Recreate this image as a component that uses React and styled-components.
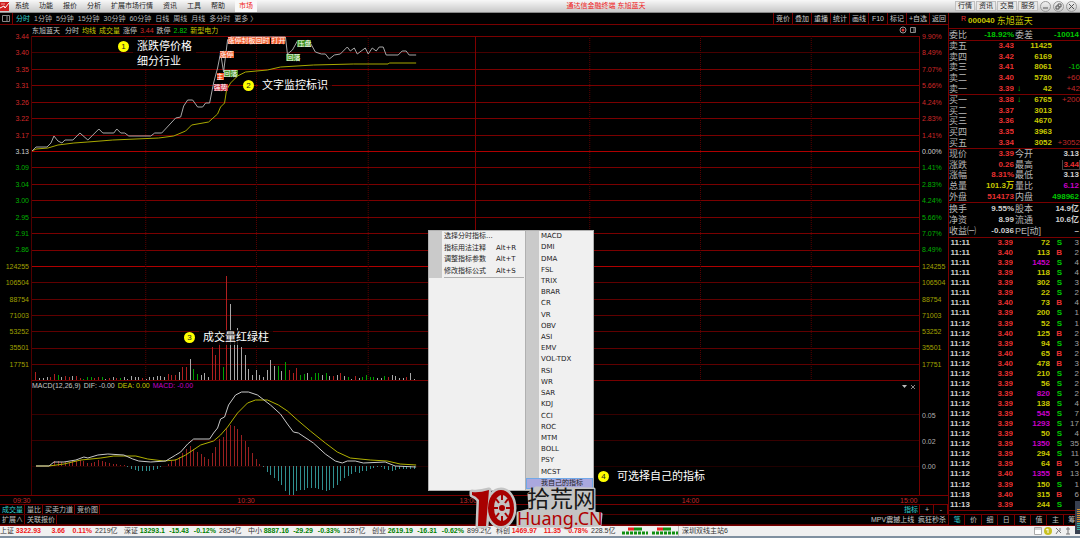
import React from 'react'
import styled, { createGlobalStyle } from 'styled-components'

const GlobalStyle = createGlobalStyle`
  * { box-sizing: border-box; }
  body {
    margin: 0;
    background: #000;
    overflow-x: hidden;
    font-family: 'Liberation Sans', 'Noto Sans CJK SC', sans-serif;
    font-size: 7px;
    line-height: 10px;
    color: #c8c8c8;
  }
  button {
    font: inherit;
    color: inherit;
    background: none;
    border: 0;
    padding: 0;
    margin: 0;
    white-space: nowrap;
  }
`

const red = '#e83030'
const green = '#00c800'
const yellow = '#c8c800'
const purple = '#c800c8'
const cyan = '#30d0d0'
const line = '#780000'

const Page = styled.div`
  position: relative;
  display: flex;
  flex-direction: column;
  white-space: nowrap;
`

/* ---------- menu bar ---------- */

const MenuBar = styled.header`
  display: flex;
  align-items: center;
  height: 13px;
  background: linear-gradient(#f8f8f8, #c8c8c8);
  border-bottom: 1px solid #888;
  color: #222;
`
const Logo = styled.svg`
  width: 10px;
  height: 10px;
  margin-right: 5px;
`
const MenuItems = styled.nav`
  display: flex;
  align-items: center;
  gap: 10px;
`
const MarketTab = styled.button`
  height: 12px;
  padding: 0 4px;
  background: #f8f8f8;
  color: #f02020;
`
const WindowTitle = styled.div`
  flex: 1;
  color: #f02020;
  text-align: center;
`
const WindowTools = styled.div`
  display: flex;
  align-items: center;
  gap: 1px;
  padding-right: 3px;
`
const ToolButton = styled.button`
  width: 20px;
  height: 10px;
  background: #e8e8e8;
  border: 1px solid #c0c0c0;
  line-height: 8px;
`
const RoundButton = styled.button`
  display: flex;
  width: 11px;
  height: 11px;
  margin-left: 1px;
  border: 1px solid #999;
  border-radius: 50%;
`

/* ---------- left side ---------- */

const Main = styled.div`
  display: flex;
`
const Left = styled.main`
  flex: 1;
  min-width: 0;
`
const Toolbar = styled.div`
  display: flex;
  height: 12px;
  border-bottom: 1px solid ${line};
  line-height: 12px;
`
const PanelToggle = styled.button`
  display: flex;
  align-items: center;
  justify-content: center;
  width: 13px;
  border-right: 1px solid ${line};
`
const Periods = styled.div`
  display: flex;
  flex: 1;
  gap: 4px;
  padding-left: 3px;
`
const Period = styled.button`
  color: ${p => (p.$on ? cyan : '#b8b8b8')};
`
const Action = styled.button`
  min-width: 19px;
  padding: 0 2px;
  border-left: 1px solid ${line};
`
const InfoRow = styled.div`
  display: flex;
  gap: 3px;
  height: 11px;
  padding: 0 32px;
  line-height: 11px;
`
const Txt = styled.span`
  color: ${p => p.$c || '#c8c8c8'};
`
const Spacer = styled.span`
  flex: 1;
`
const Panel = styled.section`
  display: grid;
  grid-template-columns: 31px 1fr 28px;
  height: ${p => p.$h}px;
`
const Axis = styled.div`
  display: flex;
  flex-direction: column;
  justify-content: space-between;
  padding: ${p => p.$pad || '0 2px'};
  text-align: ${p => (p.$right ? 'left' : 'right')};
`
const AxisLabel = styled.span`
  height: 8px;
  margin: -4px 0;
  line-height: 9px;
  color: ${p => p.$c};
`
const Plot = styled.div`
  position: relative;
  display: flex;
  flex-direction: column;
  min-width: 0;
  border-left: 1px solid #500000;
  border-right: 1px solid ${line};
`
const Chart = styled.svg`
  display: block;
  width: 100%;
  height: 100%;
  min-height: 0;
  flex: 1;
`
const PlotHead = styled.div`
  display: flex;
  gap: 3px;
  height: 11px;
  padding-right: 3px;
  border-top: 1px solid ${line};
`
const Signal = styled.span`
  position: absolute;
  height: 7px;
  line-height: 7px;
  color: #fff;
  background: ${p => p.$bg};
`
const TimeAxis = styled.div`
  display: grid;
  grid-template-columns: 31px repeat(4, 1fr) 28px;
  height: 10px;
  border-top: 1px solid ${line};
  border-bottom: 1px solid ${line};
  color: #c02828;
  line-height: 9px;
`
const TimeLabel = styled.span`
  margin-left: -16px;
  &:first-child { margin-left: 13px; }
  &:last-child { margin-left: -20px; }
`
const TabRow = styled.div`
  display: flex;
  height: 10px;
  border-bottom: 1px solid #500000;
  line-height: 10px;
`
const Tab = styled.button`
  min-width: 14px;
  padding: 0 1px 0 2px;
  border-right: 1px solid ${line};
  color: ${p => (p.$on ? cyan : '#c0c0c0')};
`

/* ---------- quote side ---------- */

const Quote = styled.aside`
  display: flex;
  flex-direction: column;
  width: 132px;
  border-left: 1px solid ${line};
  font-size: 8px;
`
const StockName = styled.h1`
  display: flex;
  align-items: center;
  gap: 2px;
  height: 16px;
  margin: 0;
  padding-left: 12px;
  border-bottom: 1px solid ${line};
  font-size: 9px;
  font-weight: normal;
  color: ${yellow};
`
const Code = styled.b`
  font-size: 8px;
`
const Mark = styled.sup`
  font-size: 7px;
  line-height: 7px;
  margin-bottom: 4px;
  color: ${red};
`
const QuoteTable = styled.table`
  width: 100%;
  height: ${p => p.$h}px;
  table-layout: fixed;
  border-collapse: collapse;
  border-bottom: 1px solid ${line};
`
const Head = styled.th`
  padding: 0;
  text-align: left;
  font-size: 9px;
  font-weight: normal;
  line-height: 10px;
  color: #b8b8b8;
  width: ${p => p.$w}px;
`
const Num = styled.td`
  padding: 0;
  padding-right: ${p => p.$pr || 0}px;
  text-align: right;
  font-weight: ${p => (p.$thin ? 'normal' : 'bold')};
  line-height: 10px;
  color: ${p => p.$c || '#d0d0d0'};
  width: ${p => p.$w}px;
  overflow: hidden;
`
const High = styled.span`
  outline: 1px solid #444;
`
const QuoteTabs = styled.div`
  display: grid;
  grid-template-columns: repeat(8, 1fr);
  height: 11px;
  margin-top: auto;
  border-top: 1px solid ${line};
  font-size: 7px;
`

/* ---------- status bar ---------- */

const StatusBar = styled.footer`
  display: flex;
  align-items: center;
  height: 13px;
  background: #f0f0f0;
  border-top: 1px solid ${line};
  border-bottom: 2px solid #8090a0;
  color: #333;
`
const IndexItem = styled.div`
  display: grid;
  grid-template-columns: 14px 27px 24px 27px 1fr;
  width: 124px;
  text-align: right;
`
const IndexNum = styled.b`
  color: ${p => (p.$up ? '#f01818' : '#008000')};
`
const Amount = styled.span`
  padding-left: 3px;
  text-align: left;
`
const Server = styled.span`
  flex: 1;
  padding-left: 3px;
  border-left: 1px solid #bbb;
`
const Traffic = styled.svg`
  width: 58px;
  height: 8px;
`
const Tray = styled.svg`
  width: 46px;
  height: 10px;
`

/* ---------- things over the chart ---------- */

const ContextMenu = styled.div`
  position: absolute;
  left: 428px;
  top: 230px;
  display: grid;
  grid-template-columns: 97px 1fr;
  width: 166px;
  height: 261px;
  background: #f0f0f0;
  border: 1px solid #b0b0b0;
  color: #222;
  font-family: 'DejaVu Sans', 'Noto Sans CJK SC', sans-serif;
`
const MenuPane = styled.div`
  border-right: 1px solid #b0b0b0;
`
const MenuGroup = styled.div`
  display: grid;
  border-left: 13px solid #cacaca;
  padding: 0 1px 1px 2px;
  height: 47px;
`
const MenuEntry = styled.button`
  display: grid;
  grid-template-columns: 52px 1fr;
  text-align: left;
  line-height: 11px;
`
const MenuRule = styled.hr`
  margin: -1px 1px 0 15px;
  border: 0;
  border-top: 1px solid #b0b0b0;
`
const SubMenu = styled.div`
  display: grid;
  padding-bottom: 1px;
  background: linear-gradient(90deg, #cacaca 13px, #f0f0f0 13px);
`
const SubEntry = styled.button`
  padding-left: 15px;
  text-align: left;
  line-height: 9px;
  ${p => p.$on && 'background: #aaa8de; outline: 1px solid #70a8e8; outline-offset: -1px;'}
`
const Note = styled.div`
  position: absolute;
  display: flex;
  gap: 4px;
  left: ${p => p.$x}px;
  top: ${p => p.$y}px;
  font-size: 11px;
  line-height: 15px;
  color: #fff;
`
const Dot = styled.span`
  width: 11px;
  height: 11px;
  margin-top: 2px;
  border-radius: 50%;
  background: #ff0;
  color: #222;
  font-size: 8px;
  line-height: 11px;
  text-align: center;
`
const NoteText = styled.p`
  margin: 0;
  padding: 0 4px;
  background: rgba(0, 0, 0, 0.75);
  white-space: pre-line;
`
const Watermark = styled.svg`
  position: absolute;
  left: 466px;
  top: 482px;
  width: 142px;
  height: 52px;
`
const Meter = styled.svg`
  position: absolute;
  right: 0;
  top: 501px;
  width: 5px;
  height: 33px;
`

/* ---------- data ---------- */

const prices = ['3.44', '3.40', '3.35', '3.31', '3.26', '3.22', '3.17', '3.13', '3.09', '3.04', '3.00', '2.95', '2.91', '2.86']
const percents = ['9.90%', '8.49%', '7.07%', '5.66%', '4.24%', '2.83%', '1.41%', '0.00%', '1.41%', '2.83%', '4.24%', '5.66%', '7.07%', '8.49%']
const volumes = ['124255', '106504', '88754', '71003', '53252', '35501', '17751']
const sideColor = i => (i < 7 ? '#d02828' : i === 7 ? '#d0d0d0' : '#00b000')

const priceLine = '31,151 35,147 46,147 50,143 53,136 57,141 61,143 64,140 72,140 79,133 87,140 98,129 102,133 113,133 116,129 120,133 124,133 128,136 150,136 154,133 161,133 175,118 180,117 183,106 187,100 192,100 197,107 202,107 205,103 209,103 213,83 217,68 220,53 223,72 227,40 230,37 285,37 287,54 292,50 297,41 310,43 315,52 321,54 325,54 329,59 334,55 340,54 347,47 350,51 354,48 357,54 365,48 368,54 372,48 376,51 379,47 383,47 386,55 398,55 402,51 406,51 409,55 416,55'
const avgLine = '31,151 35,149 47,148 57,145 73,143 87,142 112,140 158,138 173,136 185,131 191,125 208,122 217,114 220,107 224,103 226,90 230,83 237,76 245,72 267,70 280,67 313,65 353,64 388,64 389,63 416,63'
const difLine = '35,466 48,466 53,462 63,462 75,460 83,457 87,458 97,455 107,454 123,455 132,459 138,461 150,462 165,461 175,455 180,452 187,444 193,439 209,439 213,433 217,428 220,419 224,417 228,405 235,395 241,392 248,392 257,395 270,405 280,414 287,424 293,432 298,433 313,443 325,454 335,461 342,463 347,461 355,461 363,463 385,462 395,466 416,467'
const deaLine = '35,466 48,466 63,464 80,460 100,458 113,456 135,456 147,459 163,461 175,460 185,455 200,445 213,441 220,435 227,427 237,413 247,403 255,400 267,400 278,405 287,411 297,420 310,431 325,443 337,452 350,458 370,460 387,461 400,464 416,465'

// colour letter + height, one bar a minute
const volumeBars = 'r8 w2 w2 w3 r3 r6 g5 w3 r4 r3 w4 r4 r2 g1 g3 g3 r2 r3 g3 w1 r2 w3 r2 g2 w3 w1 w4 w3 w3 r2 w1 w3 w3 w4 w4 w3 r6 r5 r5 w8 r13 r13 w21 g11 g6 w5 w7 w3 r33 r25 r37 g13 r104 w76 w40 w52 w33 w25 w11 w5 w10 w5 w3 w10 w20 w14 g14 w9 g18 r10 r7 r12 g5 g6 w7 g3 g7 g7 w5 g7 w4 r4 w5 r7 w4 g3 w1 r4 w2 g3 g5 g3 g3 w2 w2 g4 r3 w5 w4 w2 w2 r3 w7 w1'.split(' ')
const macdBars = [0, 0, 0, 0, 1, 5, 5, 4, 4, 4, 5, 5, 6, 5, 3, 3, 4, 6, 5, 4, 3, 2, 2, 1, 1, -1, -3, -4, -5, -5, -5, -5, -4, -3, -1, 0, 2, 5, 7, 9, 13, 17, 20, 17, 14, 12, 9, 7, 13, 19, 27, 29, 38, 41, 40, 37, 31, 25, 19, 13, 7, 2, -1, -6, -9, -12, -15, -19, -25, -29, -29, -25, -24, -24, -22, -22, -22, -23, -24, -25, -24, -22, -19, -15, -12, -10, -8, -6, -7, -5, -5, -3, -2, -1, -1, -3, -4, -5, -4, -3, -3, -3, -3, -3]
const barColor = { r: '#b02020', g: '#00a000', w: '#a8a8a8' }
const barX = i => 35 + i * 3.68

const signals = [
  { x: 227, y: 1, text: '涨停封板回时', bg: '#f06030' },
  { x: 271, y: 1, text: '打开', bg: '#f06030' },
  { x: 219, y: 15, text: '涨停', bg: '#f06030' },
  { x: 216, y: 37, text: '主', bg: '#f05020' },
  { x: 223, y: 34, text: '回落', bg: '#409020' },
  { x: 213, y: 48, text: '强势', bg: '#c83040' },
  { x: 297, y: 4, text: '压盘', bg: '#409020' },
  { x: 286, y: 18, text: '回落', bg: '#409020' },
]

const asks = [
  ['卖五', '3.43', '', '11425', ''],
  ['卖四', '3.42', '', '6169', ''],
  ['卖三', '3.41', '', '8061', '-16'],
  ['卖二', '3.40', '', '5780', '+60'],
  ['卖一', '3.39', '↓', '42', '+42'],
]
const bids = [
  ['买一', '3.38', '↓', '6765', '+200'],
  ['买二', '3.37', '', '3013', ''],
  ['买三', '3.36', '', '4670', ''],
  ['买四', '3.35', '', '3963', ''],
  ['买五', '3.34', '', '3052', '+3052'],
]
const summary = [
  ['现价', '3.39', red, '今开', '3.13'],
  ['涨跌', '0.26', red, '最高', <High key="high">3.44</High>, red],
  ['涨幅', '8.31%', red, '最低', '3.13'],
  ['总量', '101.3万', yellow, '量比', '6.12', purple],
  ['外盘', '514173', red, '内盘', '498962', green],
]
const basics = [
  ['换手', '9.55%', '', '股本', '14.9亿'],
  ['净资', '8.99', '', '流通', '10.6亿'],
  ['收益㈠', '-0.036', '', 'PE[动]', '–'],
]
const trades = `11:11 3.39 72 S 3
11:11 3.40 113 B 2
11:11 3.39 1452 S 4
11:11 3.39 118 S 4
11:11 3.39 302 S 3
11:11 3.39 22 S 2
11:11 3.40 73 B 4
11:11 3.39 200 S 1
11:12 3.39 52 S 1
11:12 3.40 125 B 2
11:12 3.39 94 S 3
11:12 3.40 65 B 2
11:12 3.40 478 B 3
11:12 3.39 210 S 2
11:12 3.39 56 S 2
11:12 3.39 820 S 2
11:12 3.39 138 S 4
11:12 3.39 545 S 7
11:12 3.39 1293 S 17
11:12 3.39 50 S 4
11:12 3.39 1350 S 35
11:12 3.39 294 S 11
11:12 3.39 64 B 5
11:12 3.40 1355 B 13
11:12 3.39 150 S 1
11:13 3.40 315 B 6
11:13 3.39 244 S`.split('\n').map(r => r.split(' '))

const indexes = [
  ['上证', '3322.93', '3.66', '0.11%', '2219亿', true],
  ['深证', '13293.1', '-15.43', '-0.12%', '2854亿'],
  ['中小', '8887.16', '-29.29', '-0.33%', '1287亿'],
  ['创业', '2619.19', '-16.31', '-0.62%', '899.2亿'],
  ['科创', '1469.97', '11.35', '0.78%', '228.5亿', true],
]
const indicators = ['MACD', 'DMI', 'DMA', 'FSL', 'TRIX', 'BRAR', 'CR', 'VR', 'OBV', 'ASI', 'EMV', 'VOL-TDX', 'RSI', 'WR', 'SAR', 'KDJ', 'CCI', 'ROC', 'MTM', 'BOLL', 'PSY', 'MCST', '我自己的指标']

/* ---------- parts ---------- */

const Columns = ({ top, bottom }) => (
  <g stroke="#580000" shapeRendering="crispEdges">
    {[145, 256, 368, 590, 701, 812].map(x => (
      <line key={x} x1={x} x2={x} y1={top} y2={bottom} strokeDasharray="1 1" />
    ))}
    <line x1="475.5" x2="475.5" y1={top} y2={bottom} stroke="#800000" />
  </g>
)

const Curve = ({ points, color }) => (
  <polyline points={points} fill="none" stroke={color} vectorEffect="non-scaling-stroke" />
)

const PriceChart = () => (
  <Chart viewBox="31 36 889 230" preserveAspectRatio="none">
    <g shapeRendering="crispEdges">
      {prices.map((p, i) => {
        const y = 36.5 + Math.round(i * 16.43)
        return <line key={i} x1="31" x2="920" y1={y} y2={y} stroke={i === 7 ? '#b00000' : i === 1 ? '#480000' : '#7a0000'} />
      })}
    </g>
    <Columns top={36} bottom={266} />
    <Curve points={avgLine} color="#a8a800" />
    <Curve points={priceLine} color="#a8a8a8" />
  </Chart>
)

const VolumeChart = () => (
  <Chart viewBox="31 266 889 114" preserveAspectRatio="none">
    <g shapeRendering="crispEdges">
      {volumes.map((v, i) => {
        const y = 266.5 + Math.round(i * 16.3)
        return <line key={v} x1="31" x2="920" y1={y} y2={y} stroke={i === 0 ? '#b00000' : '#600000'} />
      })}
    </g>
    <Columns top={266} bottom={380} />
    <g shapeRendering="crispEdges">
      {volumeBars.map((b, i) => {
        const h = Number(b.slice(1))
        return <rect key={i} x={barX(i) - 0.5} y={380 - h} width="1" height={h} fill={barColor[b[0]]} />
      })}
    </g>
  </Chart>
)

const MacdChart = () => (
  <Chart viewBox="31 391 889 104" preserveAspectRatio="none">
    <g stroke="#380000" shapeRendering="crispEdges">
      <line x1="31" x2="920" y1="414.5" y2="414.5" />
      <line x1="31" x2="920" y1="440.5" y2="440.5" />
      <line x1="31" x2="920" y1="466.5" y2="466.5" stroke="#200000" />
    </g>
    <g shapeRendering="crispEdges">
      {macdBars.map((h, i) => (
        <rect key={i} x={barX(i) - 0.5} y={h > 0 ? 466 - h : 466} width="1" height={Math.abs(h)} fill={h > 0 ? '#982020' : '#309090'} />
      ))}
    </g>
    <Curve points={deaLine} color="#b0b000" />
    <Curve points={difLine} color="#c8c8c8" />
  </Chart>
)

const Depth = ({ rows }) => (
  <QuoteTable $h={54}>
    <tbody>
      {rows.map(([name, price, arrow, vol, diff]) => (
        <tr key={name}>
          <Head scope="row" $w={30}>{name}</Head>
          <Num $w={35} $c={red}>{price}</Num>
          <Num $w={7} $c={green}>{arrow}</Num>
          <Num $w={31} $c={yellow}>{vol}</Num>
          <Num $w={28} $thin $c={diff[0] === '-' ? green : '#c02828'}>{diff}</Num>
        </tr>
      ))}
    </tbody>
  </QuoteTable>
)

const Pairs = ({ rows, height }) => (
  <QuoteTable $h={height}>
    <tbody>
      {rows.map(([a, av, ac, b, bv, bc]) => (
        <tr key={a}>
          <Head scope="row" $w={30}>{a}</Head>
          <Num $w={36} $pr={1} $c={ac}>{av}</Num>
          <Head scope="row" $w={25}>{b}</Head>
          <Num $w={40} $pr={1} $c={bc}>{bv}</Num>
        </tr>
      ))}
    </tbody>
  </QuoteTable>
)

const QuotePanel = () => (
  <Quote>
    <StockName><Mark>R</Mark><Code>000040</Code>东旭蓝天</StockName>
    <Pairs height={12} rows={[['委比', '-18.92%', green, '委差', '-10014', green]]} />
    <Depth rows={asks} />
    <Depth rows={bids} />
    <Pairs rows={summary} height={54} />
    <Pairs rows={basics} height={35} />
    <QuoteTable $h={273}>
      <tbody>
        {trades.map(([time, price, vol, side, n], i) => (
          <tr key={i}>
            <Num $w={22} $pr={1}>{time}</Num>
            <Num $w={42} $c={red}>{price}</Num>
            <Num $w={37} $c={vol.length > 3 || vol === '820' || vol === '545' ? purple : yellow}>{vol}</Num>
            <Num $w={12} $c={side === 'S' ? green : red}>{side}</Num>
            <Num $w={18} $thin $pr={1} $c="#a0a0a0">{n}</Num>
          </tr>
        ))}
      </tbody>
    </QuoteTable>
    <QuoteTabs>
      {['笔', '价', '细', '日', '联', '值', '主', '筹'].map((t, i) => <Tab key={t} $on={i === 0}>{t}</Tab>)}
    </QuoteTabs>
  </Quote>
)

const IndicatorMenu = () => (
  <ContextMenu>
    <MenuPane>
      <MenuGroup>
        <MenuEntry>选择分时指标...</MenuEntry>
        <MenuEntry>指标用法注释 <span>Alt+R</span></MenuEntry>
        <MenuEntry>调整指标参数 <span>Alt+T</span></MenuEntry>
        <MenuEntry>修改指标公式 <span>Alt+S</span></MenuEntry>
      </MenuGroup>
      <MenuRule />
    </MenuPane>
    <SubMenu>
      {indicators.map((name, i) => <SubEntry key={name} $on={i === indicators.length - 1}>{name}</SubEntry>)}
    </SubMenu>
  </ContextMenu>
)

const SiteMark = () => (
  <Watermark viewBox="466 482 142 52">
    <g stroke="#c4c4c4" strokeWidth="5" strokeLinejoin="round" fill="#c4c4c4">
      <path d="M472 492 Q479 493 489 490 L486 526 L478 526 L479 500 Q476 496 472 495 Z" />
      <ellipse cx="501" cy="508" rx="13" ry="18" />
      <path d="M529 494 L536 488 L594 489 L594 513 L601 514 L600 525 L572 526 L568 529 L560 526 L518 526 L518 513 L530 510 Z" strokeWidth="3" />
    </g>
    <path d="M472 492 Q479 493 489 490 L486 526 L478 526 L479 500 Q476 496 472 495 Z" fill="#a80000" />
    <ellipse cx="501" cy="508" rx="13" ry="18" fill="#a80000" />
    <ellipse cx="502" cy="508" rx="8" ry="13" fill="#c4c4c4" />
    <path d="M502 494v6M502 516v6M494 508h4M506 508h4M496 499l3 4M508 499l-3 4M496 517l3-4M508 517l-3-4" stroke="#a80000" strokeWidth="2" />
    <circle cx="502" cy="508" r="3" fill="#a80000" />
    <text x="527" y="507" fontSize="23" fontFamily="'Noto Sans CJK SC', sans-serif" fill="#181818">拾荒网</text>
    <text x="517" y="525" fontSize="18" fontFamily="'Noto Sans', sans-serif" fill="#b00000">Huang.CN</text>
  </Watermark>
)

const App = () => {
  return (
    <Page>
      <GlobalStyle />
      <MenuBar>
        <Logo viewBox="0 0 10 10">
          <rect y="1" width="9" height="9" fill="#d02020" />
          <path d="M0 7 L4 5 L5 7 L9 2" stroke="#fff" fill="none" />
          <path d="M1 3h4" stroke="#f0a0a0" />
        </Logo>
        <MenuItems>
          {['系统', '功能', '报价', '分析', '扩展市场行情', '资讯', '工具', '帮助'].map(t => <button key={t}>{t}</button>)}
          <MarketTab>市场</MarketTab>
        </MenuItems>
        <WindowTitle>通达信金融终端 东旭蓝天</WindowTitle>
        <WindowTools>
          {['行情', '资讯', '交易', '服务'].map(t => <ToolButton key={t}>{t}</ToolButton>)}
          <RoundButton aria-label="最小化"><svg viewBox="0 0 9 9"><path d="M2 6h5" stroke="#555" /></svg></RoundButton>
          <RoundButton aria-label="还原"><svg viewBox="0 0 9 9"><path d="M2 4h3v3h-3zM4 4v-2h3v3h-2" stroke="#555" fill="none" /></svg></RoundButton>
          <RoundButton aria-label="关闭"><svg viewBox="0 0 9 9"><path d="M2 2l5 5M7 2l-5 5" stroke="#555" /></svg></RoundButton>
        </WindowTools>
      </MenuBar>

      <Main>
        <Left>
          <Toolbar>
            <PanelToggle aria-label="侧栏">
              <svg width="8" height="7" viewBox="0 0 8 7"><path d="M.5.5h7v6h-7zM5 1v5" stroke="#888" fill="none" /></svg>
            </PanelToggle>
            <Periods>
              {['分时', '1分钟', '5分钟', '15分钟', '30分钟', '60分钟', '日线', '周线', '月线', '多分时', '更多 〉'].map((t, i) => (
                <Period key={t} $on={i === 0}>{t}</Period>
              ))}
            </Periods>
            {['竞价', '叠加', '重播', '统计', '画线', 'F10', '标记', '+自选', '返回'].map(t => <Action key={t}>{t}</Action>)}
          </Toolbar>
          <InfoRow>
            <Txt>东旭蓝天</Txt>
            <Txt>&nbsp;分时</Txt>
            <Txt $c={yellow}>均线</Txt>
            <Txt $c={yellow}>成交量</Txt>
            <Txt>涨停</Txt>
            <Txt $c="#d02828">3.44</Txt>
            <Txt>跌停</Txt>
            <Txt $c={green}>2.82</Txt>
            <Txt $c={yellow}>新型电力</Txt>
            <Spacer />
            <svg width="20" height="11" viewBox="0 0 20 11">
              <circle cx="7" cy="5" r="3" stroke="#999" fill="none" />
              <circle cx="7" cy="5" r="1.5" fill="#e03030" />
              <path d="M14.500 2.500h5v5h-5zM18 3v5" stroke="#888" fill="none" />
            </svg>
          </InfoRow>

          <Panel $h={230}>
            <Axis>
              {prices.map((p, i) => <AxisLabel key={p} $c={sideColor(i)}>{p}</AxisLabel>)}
              <AxisLabel />
            </Axis>
            <Plot>
              <PriceChart />
              {signals.map((s, i) => (
                <Signal key={i} $bg={s.bg} style={{ left: `${((s.x - 31) / 889) * 100}%`, top: s.y }}>{s.text}</Signal>
              ))}
            </Plot>
            <Axis $right>
              {percents.map((p, i) => <AxisLabel key={i} $c={sideColor(i)}>{p}</AxisLabel>)}
              <AxisLabel />
            </Axis>
          </Panel>

          <Panel $h={114}>
            <Axis>
              {volumes.map(v => <AxisLabel key={v} $c="#a0a000">{v}</AxisLabel>)}
              <AxisLabel />
            </Axis>
            <Plot><VolumeChart /></Plot>
            <Axis $right>
              {volumes.map(v => <AxisLabel key={v} $c="#a0a000">{v}</AxisLabel>)}
              <AxisLabel />
            </Axis>
          </Panel>

          <Panel $h={115}>
            <span />
            <Plot>
              <PlotHead>
                <Txt>MACD(12,26,9)</Txt>
                <Txt>DIF: -0.00</Txt>
                <Txt $c={yellow}>DEA: 0.00</Txt>
                <Txt $c={purple}>MACD: -0.00</Txt>
                <Spacer />
                <svg width="15" height="10" viewBox="0 0 15 10">
                  <path d="M1 4h5l-2.500 3z" fill="#bbb" />
                  <path d="M10 4l4 4M14 4l-4 4" stroke="#888" />
                </svg>
              </PlotHead>
              <MacdChart />
            </Plot>
            <Axis $right $pad="35px 2px 29px">
              {['0.05', '0.02', '0.00'].map(v => <AxisLabel key={v} $c="#b0b0b0">{v}</AxisLabel>)}
            </Axis>
          </Panel>

          <TimeAxis>
            <TimeLabel>09:30</TimeLabel>
            <Spacer />
            <TimeLabel>10:30</TimeLabel>
            <TimeLabel>13:00</TimeLabel>
            <TimeLabel>14:00</TimeLabel>
            <TimeLabel>15:00</TimeLabel>
          </TimeAxis>
          <TabRow>
            {['成交量', '量比', '买卖力道', '竞价图'].map((t, i) => <Tab key={t} $on={i === 0}>{t}</Tab>)}
            <Spacer />
            <Tab $on>指标</Tab>
            <Tab>+</Tab>
            <Tab>-</Tab>
          </TabRow>
          <TabRow>
            <Tab>扩展∧</Tab>
            <Tab>关联报价</Tab>
            <Spacer />
            <Txt>MPV震撼上线&nbsp; 疯狂秒杀&nbsp;</Txt>
          </TabRow>
        </Left>
        <QuotePanel />
      </Main>

      <StatusBar>
        {indexes.map(([name, value, diff, pct, amount, up]) => (
          <IndexItem key={name}>
            <span>{name}</span>
            <IndexNum $up={up}>{value}</IndexNum>
            <IndexNum $up={up}>{diff}</IndexNum>
            <IndexNum $up={up}>{pct}</IndexNum>
            <Amount>{amount}</Amount>
          </IndexItem>
        ))}
        <Traffic viewBox="0 0 58 8">
          <path d="M2 6h26M32 6h26" stroke="#109010" strokeWidth="3" strokeDasharray="3 1" />
          <path d="M8 2h6M37 2h6" stroke="#f02020" strokeWidth="3" />
          <path d="M14 2h8M43 2h8" stroke="#109010" strokeWidth="3" />
        </Traffic>
        <Server>深圳双线主站6</Server>
        <Tray viewBox="0 0 46 10">
          <path d="M.5 1.500h7v7h-7zM1 3h6" stroke="#aaa" fill="#fff" />
          <circle cx="14" cy="5" r="4" fill="#c8c020" />
          <path d="M14 3v4M12 4l2-1" stroke="#fff" />
          <path d="M22 2l5 5M22 8l2-3M26 2v3" stroke="#777" />
          <path d="M34 1v7M32 3h4M32 8h4" stroke="#777" />
        </Tray>
      </StatusBar>

      <Note $x={118} $y={39}><Dot>1</Dot><NoteText>{'涨跌停价格\n细分行业'}</NoteText></Note>
      <Note $x={243} $y={78}><Dot>2</Dot><NoteText>文字监控标识</NoteText></Note>
      <Note $x={184} $y={330}><Dot>3</Dot><NoteText>成交量红绿柱</NoteText></Note>
      <IndicatorMenu />
      <Note $x={598} $y={469}><Dot>4</Dot><NoteText>可选择自己的指标</NoteText></Note>
      <SiteMark />
      <Meter viewBox="0 0 5 33">
        <rect width="5" height="33" fill="#384050" />
        <path d="M3.500 8v14" stroke="#d09030" strokeWidth="3" strokeDasharray="1 1" />
        <path d="M3.500 22v8" stroke="#30b0a0" strokeWidth="3" strokeDasharray="1 1" />
      </Meter>
    </Page>
  )
}

export default App
